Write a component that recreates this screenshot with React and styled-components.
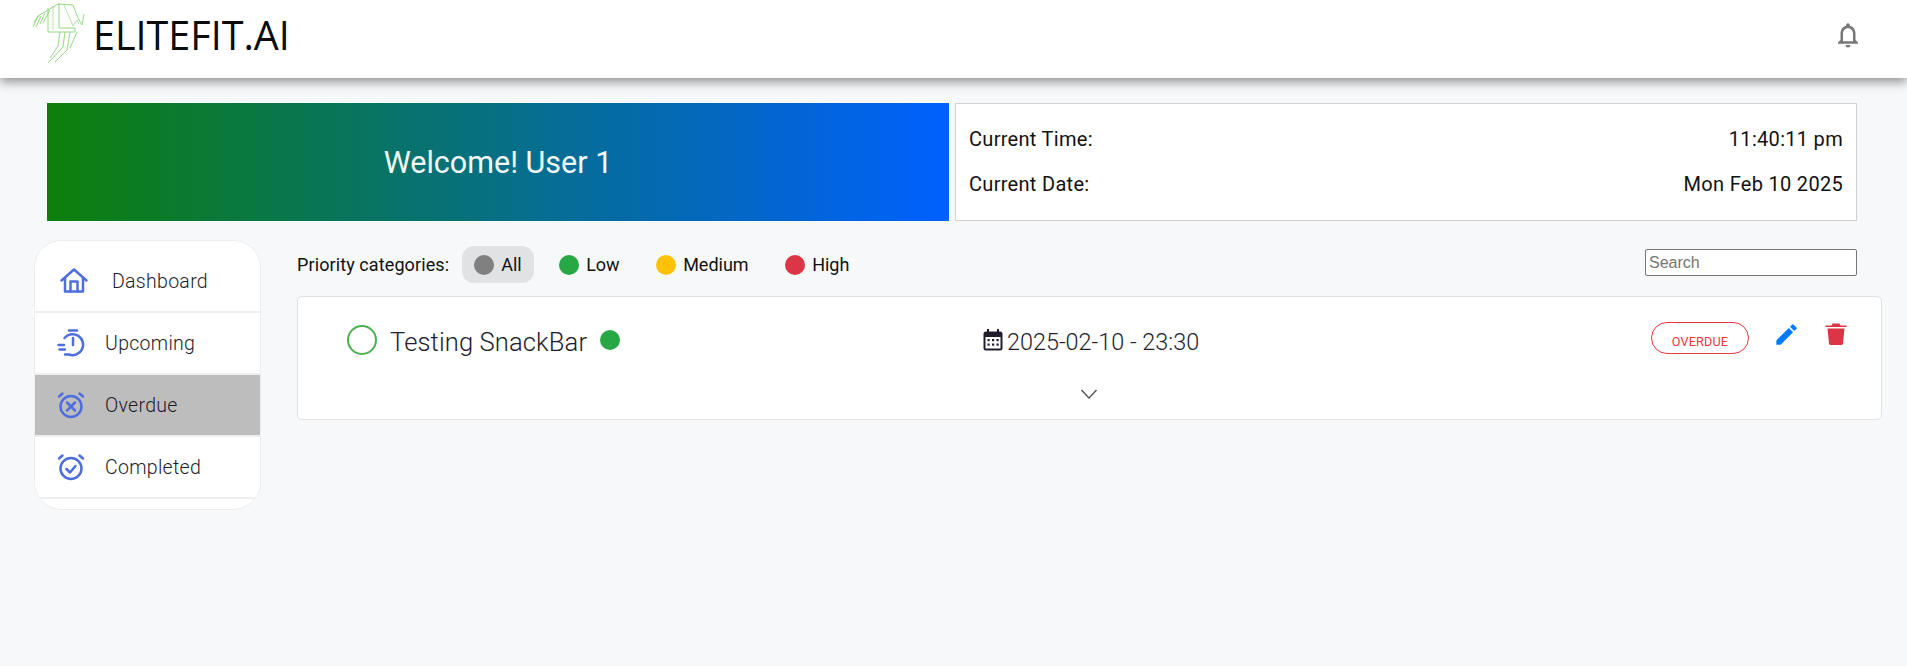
import React from "react";
import styled, { createGlobalStyle } from "styled-components";
import { MdEdit, MdOutlineNotifications } from "react-icons/md";

const Global = createGlobalStyle`
  html, body { margin: 0; padding: 0; background: #f7f8fa; }
  body { font-family: Roboto, "Liberation Sans", sans-serif; color: #212529; }
  * { box-sizing: border-box; }
`;

const Page = styled.div`
  min-height: 666px;
  height: 666px;
  overflow: hidden;
  background: #f7f8fa;
`;
const Header = styled.header`
  height: 78px;
  background: #fff;
  box-shadow: 0 4px 10px rgba(0, 0, 0, 0.42);
  display: flex;
  align-items: flex-start;
  justify-content: space-between;
  padding: 0 44px 0 20px;
`;
const Brand = styled.div`
  display: flex;
  align-items: flex-start;
  gap: 3px;
`;
const BrandName = styled.span`
  font-family: "Open Sans", sans-serif;
  font-size: 39.5px;
  line-height: 54px;
  margin-top: 8px;
  color: #0b0b0b;
`;
const BellWrap = styled.div`
  margin-top: 20px;
  color: #777;
  display: flex;
`;
const BannerRow = styled.section`
  display: grid;
  grid-template-columns: 902px 902px;
  gap: 6px;
  padding: 25px 0 0 47px;
`;
const Banner = styled.div`
  height: 118px;
  background: linear-gradient(90deg, #0d7f0a 0%, #0060ff 100%);
  color: #f4f8f4;
  font-size: 30.5px;
  display: flex;
  align-items: center;
  justify-content: center;
`;
const Clock = styled.div`
  height: 118px;
  background: #fff;
  border: 1px solid #d2d2d2;
  padding: 24px 13px 0;
  display: flex;
  flex-direction: column;
  gap: 23px;
`;
const ClockRow = styled.div`
  display: flex;
  justify-content: space-between;
  font-size: 20px;
  line-height: 22px;
  letter-spacing: 0.3px;
  color: #111;
`;
const Content = styled.div`
  display: flex;
  align-items: flex-start;
  gap: 36px;
  padding: 19px 25px 0 34px;
`;
const Side = styled.nav`
  width: 227px;
  height: 270px;
  flex: none;
  background: #fff;
  border: 1px solid #ececec;
  border-radius: 28px;
  overflow: hidden;
`;
const SideItem = styled.div`
  height: ${(p) => p.$h}px;
  background: ${(p) => (p.$active ? "#bdbdbd" : "#fff")};
  border-bottom: 2px solid #eeeeee;
  display: flex;
  align-items: center;
  padding-left: ${(p) => p.$pad}px;
  padding-top: ${(p) => p.$top || 0}px;
  gap: ${(p) => p.$gap}px;
  font-size: 19.5px;
  font-weight: 300;
  letter-spacing: 0.3px;
  color: #1c1c2a;
`;
const Main = styled.main`
  flex: 1;
  min-width: 0;
`;
const Filters = styled.div`
  height: 56px;
  padding-top: 6px;
  display: flex;
  align-items: flex-start;
  font-size: 18px;
  color: #111;
`;
const FilterLabel = styled.span`
  line-height: 37px;
  margin-right: 13px;
  letter-spacing: 0.1px;
`;
const Chip = styled.div`
  height: 37px;
  width: ${(p) => p.$w}px;
  flex: none;
  border-radius: 12px;
  background: ${(p) => (p.$on ? "#e1e2e4" : "transparent")};
  display: flex;
  align-items: center;
  gap: 7px;
  padding-left: 12px;
  margin-right: ${(p) => p.$mr}px;
`;
const Dot = styled.span`
  width: 20px;
  height: 20px;
  flex: none;
  border-radius: 50%;
  background: ${(p) => p.$c};
`;
const Search = styled.input`
  margin-left: auto;
  margin-right: 25px;
  margin-top: 3px;
  width: 212px;
  height: 27px;
  border: 1px solid #767676;
  border-radius: 2px;
  padding: 0 3px;
  font-family: "Liberation Sans", sans-serif;
  font-size: 16px;
  background: #fff;
  &::placeholder { color: #757575; opacity: 1; }
`;
const Card = styled.article`
  height: 124px;
  background: #fff;
  border: 1px solid #e1e1e1;
  border-radius: 5px;
  position: relative;
  display: grid;
  grid-template-columns: 636px 1fr auto;
  padding: 28px 34px 0 49px;
`;
const TitleCell = styled.div`
  display: flex;
  align-items: center;
  height: 30px;
`;
const Check = styled.span`
  width: 30px;
  height: 30px;
  border-radius: 50%;
  border: 2px solid #4caf50;
  margin-right: 13px;
  flex: none;
`;
const Title = styled.span`
  font-size: 25.6px;
  font-weight: 300;
  color: #201c2c;
  letter-spacing: 0.1px;
  margin-right: 13px;
  padding-top: 3px;
`;
const DateCell = styled.div`
  display: flex;
  align-items: center;
  height: 30px;
  gap: 4px;
  font-size: 23.4px;
  font-weight: 300;
  color: #201c2c;
`;
const DateText = styled.span`
  padding-top: 3px;
`;
const Actions = styled.div`
  display: flex;
  align-items: flex-start;
`;
const Badge = styled.span`
  width: 98px;
  height: 32px;
  margin-top: -3px;
  border: 1px solid #f0353f;
  border-radius: 16px;
  color: #f0353f;
  font-size: 12.6px;
  letter-spacing: 0.2px;
  display: flex;
  align-items: center;
  justify-content: center;
  padding-top: 6px;
  margin-right: 24px;
`;
const EditBtn = styled.span`
  color: #007bff;
  display: flex;
  margin-top: -4px;
  margin-right: 25px;
`;
const TrashBtn = styled.span`
  color: #dc3545;
  display: flex;
  margin-top: -3px;
`;
const Expand = styled.span`
  position: absolute;
  left: 782px;
  top: 92px;
  display: flex;
  color: #555;
`;

const Logo = () => (
  <svg width="70" height="70" viewBox="0 0 70 70" fill="none" stroke="#8bd276" strokeWidth="0.9">
    <path d="M13 27L18 16L38 4L53 5L58 18L62 25L64 14" />
    <path d="M16 27L21 16M20 24L25 13M23 23L30 10M14 22L19 15" />
    <path d="M28 8V32H55V28H39V3" />
    <path d="M33 6V30M44 5L53 26L57 20L59 24" strokeOpacity="0.7" />
    <path d="M45 32L43 47L28 63M50 32L47 50L35 62M57 32L50 48M40 32L38 46L30 58" />
  </svg>
);

const Ic = ({ children, size = 30 }) => (
  <svg width={size} height={size} viewBox="0 0 30 30" fill="none" stroke="#4f6ede" strokeWidth="2.5" strokeLinecap="round" strokeLinejoin="round">
    {children}
  </svg>
);
const HomeIcon = () => (
  <Ic>
    <path d="M2.5 14.5L15 3.5L27.5 14.5" />
    <path d="M6 12V25.5H24V12" />
    <path d="M11.5 25.5V15.5H18.5V25.5" />
  </Ic>
);
const TimerIcon = () => (
  <Ic>
    <path d="M13 2.5H21" />
    <path d="M17 10V17" />
    <path d="M8.500 10A10.500 10.500 0 1 1 13 26.500H9" />
    <path d="M2.500 17H8M3.500 21.500H9" />
  </Ic>
);
const AlarmBase = ({ children }) => (
  <Ic>
    <circle cx="15" cy="16.500" r="10.500" />
    <path d="M3 6.500L6.500 3.500M27 6.500L23.500 3.500" />
    {children}
  </Ic>
);
const CalendarIcon = () => (
  <svg width="20" height="22" viewBox="0 0 20 22">
    <rect x="0.5" y="2.500" width="19" height="19" rx="2.500" fill="#201c2c" />
    <rect x="4" y="0" width="2" height="4" fill="#201c2c" />
    <rect x="14" y="0" width="2" height="4" fill="#201c2c" />
    <rect x="2.500" y="8" width="15" height="11.500" fill="#fff" />
    {[4.500, 9, 13.500].map((x) =>
      [10, 14.500].map((y) => <rect key={x + "-" + y} x={x} y={y} width="2.200" height="2.200" fill="#201c2c" />)
    )}
  </svg>
);
const TrashIcon = () => (
  <svg width="22" height="24" viewBox="0 0 22 24" fill="currentColor">
    <path d="M7.500 1.500H14.500L15.500 3.500H21.500V5H0.500V3.500H6.500Z" />
    <path d="M2.500 6.500H19.500L18 21.500Q17.800 23 16 23H6Q4.200 23 4 21.500Z" />
  </svg>
);
const Chevron = () => (
  <svg width="18" height="11" viewBox="0 0 18 11" fill="none" stroke="currentColor" strokeWidth="1.400">
    <path d="M1.500 1L9 9L16.500 1" />
  </svg>
);

const nav = [
  { label: "Dashboard", icon: <HomeIcon />, h: 72, pad: 24, gap: 23, top: 10 },
  { label: "Upcoming", icon: <TimerIcon />, h: 62, pad: 21, gap: 19 },
  { label: "Overdue", icon: <AlarmBase><path d="M11 12.500L19 20.500M19 12.500L11 20.500" /></AlarmBase>, h: 62, pad: 21, gap: 19, active: true },
  { label: "Completed", icon: <AlarmBase><path d="M10.500 17L14 20.500L19.500 14" /></AlarmBase>, h: 62, pad: 21, gap: 19 },
];
const chips = [
  { label: "All", c: "#808080", w: 72, mr: 13, on: true },
  { label: "Low", c: "#28a745", w: 85, mr: 12 },
  { label: "Medium", c: "#ffc107", w: 117, mr: 12 },
  { label: "High", c: "#dc3545", w: 80, mr: 0 },
];

export default function App() {
  return (
    <Page>
      <Global />
      <Header>
        <Brand>
          <Logo />
          <BrandName>ELITEFIT.AI</BrandName>
        </Brand>
        <BellWrap><MdOutlineNotifications size={30} /></BellWrap>
      </Header>
      <BannerRow>
        <Banner>Welcome! User 1</Banner>
        <Clock>
          <ClockRow><span>Current Time:</span><span>11:40:11 pm</span></ClockRow>
          <ClockRow><span>Current Date:</span><span>Mon Feb 10 2025</span></ClockRow>
        </Clock>
      </BannerRow>
      <Content>
        <Side>
          {nav.map((n) => (
            <SideItem key={n.label} $h={n.h} $pad={n.pad} $gap={n.gap} $top={n.top} $active={n.active}>
              {n.icon}
              <span>{n.label}</span>
            </SideItem>
          ))}
        </Side>
        <Main>
          <Filters>
            <FilterLabel>Priority categories:</FilterLabel>
            {chips.map((c) => (
              <Chip key={c.label} $w={c.w} $mr={c.mr} $on={c.on}>
                <Dot $c={c.c} />
                <span>{c.label}</span>
              </Chip>
            ))}
            <Search placeholder="Search" />
          </Filters>
          <Card>
            <TitleCell>
              <Check />
              <Title>Testing SnackBar</Title>
              <Dot $c="#28a745" />
            </TitleCell>
            <DateCell>
              <CalendarIcon />
              <DateText>2025-02-10 - 23:30</DateText>
            </DateCell>
            <Actions>
              <Badge>OVERDUE</Badge>
              <EditBtn><MdEdit size={27} /></EditBtn>
              <TrashBtn><TrashIcon /></TrashBtn>
            </Actions>
            <Expand><Chevron /></Expand>
          </Card>
        </Main>
      </Content>
    </Page>
  );
}
